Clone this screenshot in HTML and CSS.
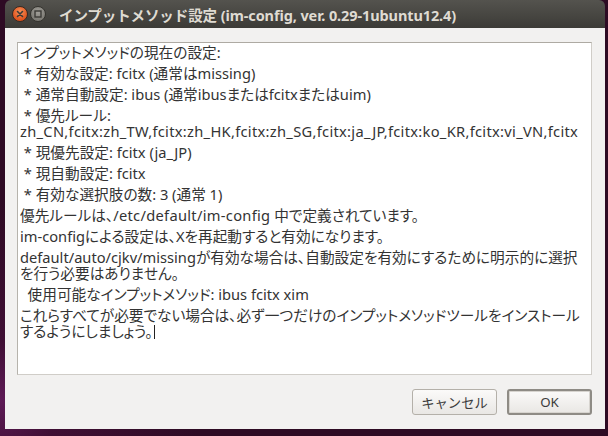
FILE: index.html
```html
<!DOCTYPE html>
<html lang="ja">
<head>
  <meta charset="UTF-8" />
  <title>インプットメソッド設定</title>
  <link rel="stylesheet" href="styles.css">
</head>
<body>
  <div class="window">
    <div class="titlebar">
      <div class="win-buttons">
        <span class="btn-close">
          <svg width="10" height="10" viewBox="0 0 10 10">
            <path d="M2.5 2.5 L7.5 7.5 M7.5 2.5 L2.5 7.5" stroke="#3c3b37" stroke-width="1.6" stroke-linecap="round" />
          </svg>
        </span>
        <span class="btn-min">
          <svg width="10" height="10" viewBox="0 0 10 10">
            <rect x="2" y="2" width="6" height="6" fill="none" stroke="#3c3b37" stroke-width="1.4" />
          </svg>
        </span>
      </div>
      <div class="title">インプットメソッド設定 (im-config, ver. 0.29-1ubuntu12.4)</div>
    </div>

    <div class="content">
      <div class="textview">
        <p>インプットメソッドの現在の設定:</p>
        <p>&nbsp;* 有効な設定: fcitx (通常はmissing)</p>
        <p>&nbsp;* 通常自動設定: ibus (通常ibusまたはfcitxまたはuim)</p>
        <p>&nbsp;* 優先ルール:<br><span class="rule-list">zh_CN,fcitx:zh_TW,fcitx:zh_HK,fcitx:zh_SG,fcitx:ja_JP,fcitx:ko_KR,fcitx:vi_VN,fcitx</span></p>
        <p>&nbsp;* 現優先設定: fcitx (ja_JP)</p>
        <p>&nbsp;* 現自動設定: fcitx</p>
        <p>&nbsp;* 有効な選択肢の数: 3 (通常 1)</p>
        <p>優先ルールは、<span class="path">/etc/default/im-config</span> 中で定義されています。</p>
        <p>im-configによる設定は、Xを再起動すると有効になります。</p>
        <p>default/auto/cjkv/missingが有効な場合は、自動設定を有効にするために明示的に選択<br>を行う必要はありません。</p>
        <p>&nbsp; 使用可能なインプットメソッド: ibus fcitx xim</p>
        <p>これらすべてが必要でない場合は、必ず一つだけのインプットメソッドツールをインストール<br>するようにしましょう。<span class="caret"></span></p>
      </div>

      <div class="actions">
        <button class="button">キャンセル</button>
        <button class="button default">OK</button>
      </div>
    </div>
  </div>
</body>
</html>
```

FILE: styles.css
```css
body {
  margin: 0;
  width: 608px;
  height: 436px;
  overflow: hidden;
  font-family: "Noto Sans", "Noto Sans CJK JP", sans-serif;
  background: radial-gradient(circle at 0 400px, #5e1a56 0, #3f0f34 60px, #2e0b24 200px),
    linear-gradient(90deg, #33101f, #4a1634);
  background-color: #2e0b24;
}

.window {
  margin-left: 5px;
  width: 600px;
  height: 429px;
  display: flex;
  flex-direction: column;
}

/* title bar */
.titlebar {
  height: 28px;
  display: flex;
  align-items: center;
  border-radius: 6px 6px 0 0;
  background: linear-gradient(#54534e, #3c3b37);
  color: #dfdbd2;
}

.win-buttons {
  display: flex;
  align-items: center;
  gap: 2px;
  margin-left: 7px;
  margin-right: 13px;
}

.win-buttons span {
  width: 16px;
  height: 16px;
  border-radius: 50%;
  display: flex;
  align-items: center;
  justify-content: center;
  box-sizing: border-box;
}

.btn-close {
  background: radial-gradient(circle at 50% 35%, #f7915a, #e0531d 70%);
  border: 1px solid #3a2a22;
}

.btn-min {
  background: radial-gradient(circle at 50% 35%, #a19f99, #7d7b75 70%);
  border: 1px solid #35342f;
}

.title {
  font-weight: bold;
  font-size: 14.5px;
  letter-spacing: -0.1px;
  white-space: nowrap;
}

/* dialog body */
.content {
  flex: 1;
  background: #f2f1f0;
  padding: 14px 13px 14px 12px;
  display: flex;
  flex-direction: column;
}

/* proportional kana, like the desktop's Japanese font */
.textview {
  flex: 1;
  background: #fff;
  border: 1px solid #d0cdc8;
  border-top-color: #aeaaa3;
  border-left-color: #b6b3ac;
  padding: 1px 2px 0;
  font-family: "Noto Sans", "Noto Sans CJK JP", sans-serif;
  font-feature-settings: "palt";
  font-size: 14.67px;
  line-height: 16px;
  color: #333;
  white-space: nowrap;
}

.textview p {
  margin: 0 0 5px;
}

.rule-list {
  letter-spacing: 0.3px;
}

.path {
  letter-spacing: 0.3px;
}

.caret {
  display: inline-block;
  width: 1px;
  height: 14px;
  background: #222;
  vertical-align: -2px;
  margin-left: 1px;
}

.actions {
  margin-top: 14px;
  display: flex;
  justify-content: flex-end;
  gap: 10px;
}

.button {
  width: 85px;
  height: 26px;
  font-family: inherit;
  font-size: 13.3px;
  color: #3c3c3c;
  background: linear-gradient(#fbfaf9, #e9e7e4);
  border: 1px solid #b4b0a9;
  border-radius: 3px;
  padding: 0;
}

.button.default {
  border: 2px solid #8e8b85;
  box-shadow: inset 0 0 0 1px #d7d4cf;
}
```
